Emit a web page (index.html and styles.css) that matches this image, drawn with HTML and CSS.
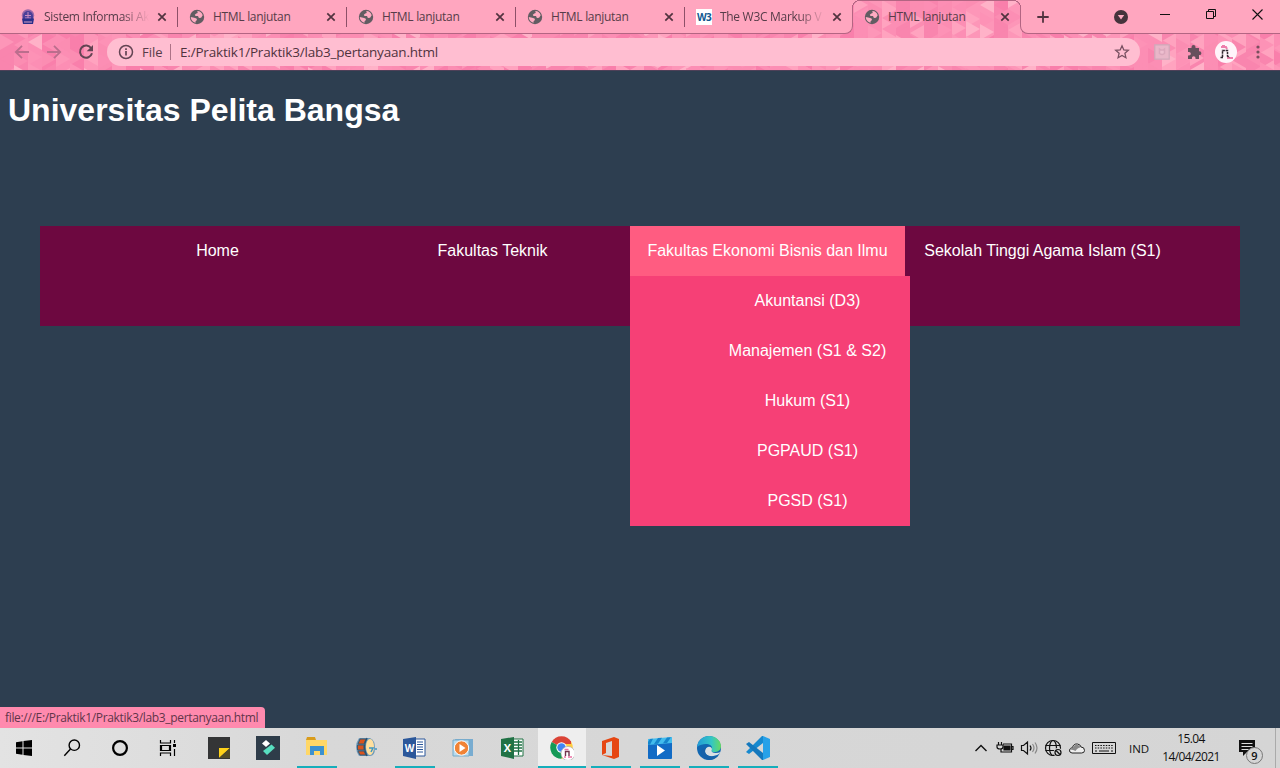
FILE: index.html
```html
<!DOCTYPE html>
<html lang="id">
<head>
<meta charset="utf-8">
<title>HTML lanjutan</title>
<link rel="stylesheet" href="styles.css">
</head>
<body>
<svg class="defs" width="0" height="0">
  <symbol id="globe" viewBox="0 0 16 16"><circle cx="8" cy="8" r="7.2" fill="#625c62"/><path d="M1.800 8l3.400.800 2.300.700.500 1.500-1.500 1.200.3 1.400C4 13.300 1.800 11 1.800 8zM8.300 2c2.800.1 4.700 1.800 5.400 4.300l-1.600 2.400-2.200.2-.9-1.800-2.500-.2-.7-1.200 1.500-1.200 1.400-.4z" fill="#ffabc2"/></symbol>
  <symbol id="close" viewBox="0 0 10 10"><path d="M1.300 1.300l7.400 7.400M8.700 1.300L1.300 8.700" stroke="#51333f" stroke-width="1.700"/></symbol>
</svg>

<header class="browser">
  <svg class="texture" id="texture" width="1280" height="70"></svg>
  <div class="tabs">
    <div class="tab-group">
      <div class="tab">
        <svg class="fav" viewBox="0 0 16 16"><circle cx="8" cy="6.500" r="6.200" fill="#9a68a8"/><path d="M3 7a5 5 0 0110 0v5H3z" fill="#4a3f98"/><path d="M5 6.500h6M5 9h6M8 3v6" stroke="#c98cc0"/><path d="M2 9.500h12l-1 5.500H3z" fill="#2a2f8a"/><path d="M4 13h8" stroke="#d8a0c4"/></svg>
        <span class="label fade">Sistem Informasi Ak</span><svg class="x"><use href="#close"/></svg>
      </div>
      <div class="tab"><svg class="fav"><use href="#globe"/></svg><span class="label">HTML lanjutan</span><svg class="x"><use href="#close"/></svg></div>
      <div class="tab"><svg class="fav"><use href="#globe"/></svg><span class="label">HTML lanjutan</span><svg class="x"><use href="#close"/></svg></div>
      <div class="tab"><svg class="fav"><use href="#globe"/></svg><span class="label">HTML lanjutan</span><svg class="x"><use href="#close"/></svg></div>
      <div class="tab last">
        <span class="fav w3">W3</span>
        <span class="label fade">The W3C Markup V</span><svg class="x"><use href="#close"/></svg>
      </div>
    </div>
    <div class="tab active"><svg class="fav"><use href="#globe"/></svg><span class="label">HTML lanjutan</span><svg class="x"><use href="#close"/></svg></div>
    <div class="window-bar">
      <svg class="plus" width="12" height="12" viewBox="0 0 12 12"><path d="M6 .3v11.400M.3 6h11.400" stroke="#51333f" stroke-width="1.800"/></svg>
      <svg class="media" width="14" height="14" viewBox="0 0 14 14"><circle cx="7" cy="7" r="7" fill="#46333c"/><path d="M3.800 5h6.400L7 9.500z" fill="#ffabc2"/></svg>
      <svg class="min" width="10" height="10" viewBox="0 0 10 10"><path d="M0 5.500h10" stroke="#111"/></svg>
      <svg class="restore" width="10" height="10" viewBox="0 0 10 10" fill="none" stroke="#111"><path d="M.5 2.500h7v7h-7zM2.500 2.500v-2h7v7h-2"/></svg>
      <svg class="exit" width="11" height="11" viewBox="0 0 11 11"><path d="M.5.5l10 10M10.500.5l-10 10" stroke="#111" stroke-width="1.100"/></svg>
    </div>
  </div>
  <div class="toolbar">
    <div class="nav-icons">
      <svg width="16" height="16" viewBox="0 0 16 16" fill="none" stroke="#bb6e8d" stroke-width="1.800"><path d="M15 8H2M8 1.800L1.800 8 8 14.200"/></svg>
      <svg width="16" height="16" viewBox="0 0 16 16" fill="none" stroke="#bb6e8d" stroke-width="1.800"><path d="M1 8h13M8 1.800L14.200 8 8 14.200"/></svg>
      <svg width="16" height="16" viewBox="0 0 16 16"><path d="M13.200 4.200A6.100 6.100 0 1014 9.300" fill="none" stroke="#634453" stroke-width="2"/><path d="M15 1v6.300H8.700z" fill="#634453"/></svg>
    </div>
    <div class="address">
      <svg width="16" height="16" viewBox="0 0 16 16"><circle cx="8" cy="8" r="6.500" fill="none" stroke="#634453" stroke-width="1.500"/><path d="M8 7v4.500M8 4.300v1.700" stroke="#634453" stroke-width="1.700"/></svg>
      <span class="scheme">File</span>
      <span class="url">E:/Praktik1/Praktik3/lab3_pertanyaan.html</span>
      <svg class="star" width="16" height="16" viewBox="0 0 16 16"><path d="M8 1.800l1.800 4.100 4.500.4-3.400 3 1 4.400L8 11.400l-3.900 2.300 1-4.400-3.400-3 4.500-.4z" fill="none" stroke="#785061" stroke-width="1.300"/></svg>
    </div>
    <div class="extensions">
      <svg width="16" height="16" viewBox="0 0 16 16"><path d="M.8.8h14.400v14.400H.8z" fill="#e9b6c8" stroke="#cfa9b9" stroke-width="1.200"/><path d="M5.500 5v4.500q2.500 2 5 0V5L9 6H7z" fill="#eebfd0" stroke="#dba8bc" stroke-width="1.500"/></svg>
      <svg width="16" height="16" viewBox="0 0 16 16"><path d="M2 4h3.500V3a2 2 0 014 0v1H13v3.300h.500a1.900 1.900 0 010 3.800H13V15H9.500v-1a1.800 1.800 0 00-3.600 0v1H2v-3.500h1a1.800 1.800 0 000-3.600H2z" fill="#66505c"/></svg>
      <svg width="22" height="22" viewBox="0 0 22 22"><circle cx="11" cy="11" r="11" fill="#fff4fa"/><path d="M6 6h5l1 2M12 17h6M7 5h3" stroke="#ee7eac" stroke-width="2" fill="none"/><path d="M7.500 16V9.500h5V15l2 1.500M5.500 16.500h2.500" stroke="#30252f" stroke-width="1.500" fill="none" stroke-dasharray="2.500 .7"/></svg>
      <svg width="4" height="14" viewBox="0 0 4 14" fill="#79505f"><circle cx="2" cy="2" r="1.600"/><circle cx="2" cy="7" r="1.600"/><circle cx="2" cy="12" r="1.600"/></svg>
    </div>
  </div>
</header>

<main class="page">
  <h1>Universitas Pelita Bangsa</h1>
  <nav class="menu">
    <ul class="menu-list">
      <li>Home</li>
      <li>Fakultas Teknik</li>
      <li class="open">Fakultas Ekonomi Bisnis dan Ilmu
        <ul class="submenu">
          <li>Akuntansi (D3)</li><li>Manajemen (S1 &amp; S2)</li><li>Hukum (S1)</li><li>PGPAUD (S1)</li><li>PGSD (S1)</li>
        </ul>
      </li>
      <li>Sekolah Tinggi Agama Islam (S1)</li>
    </ul>
  </nav>
  <div class="status"><span>file:///E:/Praktik1/Praktik3/lab3_pertanyaan.html</span></div>
</main>

<footer class="taskbar">
  <div class="system">
    <div><svg viewBox="0 0 24 24"><path d="M4 6.200l6.500-1v6.300H4zM11.500 5L20 4v7.500h-8.500zM4 12.500h6.500v6.300L4 17.800zM11.500 12.500H20V20l-8.500-1.100z"/></svg></div>
    <div><svg viewBox="0 0 24 24" fill="none" stroke="#000" stroke-width="1.400"><circle cx="14.300" cy="9.200" r="5.200"/><path d="M10.500 13L4.300 19.700"/></svg></div>
    <div><svg viewBox="0 0 24 24"><circle cx="12" cy="12" r="6.900" fill="none" stroke="#000" stroke-width="2.200"/></svg></div>
    <div><svg viewBox="0 0 24 24" fill="none" stroke="#000" stroke-width="1.200"><path d="M4.500 4v3h10V4M4.500 20v-3h10v3M5.500 9.500h8v5h-8zM4.500 9v6M14.500 9v6M18.500 4v3M18.500 13v7"/><path d="M17 8h3v3h-3z" fill="#000" stroke="none"/></svg></div>
  </div>
  <div class="apps">
    <div><svg viewBox="0 0 24 24"><path d="M1 1h22v22H1z" fill="#343536"/><path d="M12 12h11L12 22z" fill="#ffd219"/><path d="M12 22l11-10v10z" fill="#514b28"/></svg></div>
    <div><svg viewBox="0 0 24 24"><path d="M0 0h24v24H0z" fill="#2e3c49"/><path d="M10 4l4 3.500-4 3.500-4-3.500z" fill="#fff"/><path d="M15.500 8.500l3.500 3.300-8 7.200-4-4z" fill="#58dfc0"/></svg></div>
    <div class="running"><svg viewBox="0 0 24 24"><path d="M1 4l1-3h8l1 3z" fill="#d99c1c"/><path d="M1 4h21v15H1z" fill="#ffd766"/><path d="M5 10h14v9h-4v-4H9v4H5z" fill="#3c91cf"/></svg></div>
    <div><svg viewBox="0 0 24 24"><path d="M5 2h11q5 2 5 10t-5 8H5q-6-9 0-18z" fill="#6f9bbb"/><ellipse cx="16" cy="11" rx="4" ry="8" fill="#ffdf9e"/><path d="M6 3h6l-2 5H4zM3.500 9H10v5H3.500zM4 15h6l2 4H6z" fill="#d9531d" stroke="#395971"/><path d="M13 2q-5 9 0 18" stroke="#2b526e" fill="none" stroke-width="1.500"/><path d="M15 12h4l-2 4" stroke="#3c97c4" stroke-width="1.500" fill="none"/><circle cx="22" cy="13" r="1" fill="#3c97c4"/></svg></div>
    <div class="running"><svg viewBox="0 0 24 24"><path d="M12 3h10v17H12z" fill="#fff" stroke="#2b579a"/><path d="M14 6h6M14 8.500h6M14 11h6M14 13.500h6M14 16h6" stroke="#2b579a"/><path d="M0 3l13-2v22L0 20z" fill="#2b579a"/><text x="1.800" y="15.500" class="letter w-letter">W</text></svg></div>
    <div><svg viewBox="0 0 24 24"><path d="M3 3h18v17H6z" fill="#78acd0"/><path d="M1 4h16v16H1z" fill="#b9dbee" stroke="#76abc9"/><circle cx="9.500" cy="12" r="7.200" fill="#f18335" stroke="#fff"/><path d="M7.500 8v8l6-4z" fill="#fff"/></svg></div>
    <div><svg viewBox="0 0 24 24"><path d="M12 3h10v17H12z" fill="#fff" stroke="#207245"/><path d="M13 6h8M13 9h8M13 12h8M13 15h8M17.500 4v15" stroke="#207245" stroke-width="1.300"/><path d="M0 3l13-2v22L0 20z" fill="#207245"/><text x="2.700" y="16" class="letter x-letter">X</text></svg></div>
    <div class="running focused"><svg viewBox="0 0 24 24"><path d="M11.500 11.500L1.700 5.900A11.300 11.300 0 0121.300 5.900z" fill="#db4437"/><path d="M1.700 5.900A11.300 11.300 0 0011.500 22.800l4.800-8.500z" fill="#159957"/><path d="M21.300 5.900A11.300 11.300 0 0111.500 22.800l2-10 1-6.900z" fill="#ffcd40"/><path d="M4 5h17v3h-9z" fill="#db4437"/><circle cx="11.500" cy="11.500" r="5.200" fill="#fff"/><circle cx="11.500" cy="11.500" r="4.200" fill="#4285f4"/><circle cx="18" cy="17.500" r="7" fill="#fff" stroke="#aaa" stroke-width=".7"/><path d="M14.500 13.500h4M18 21h4M14 21h2" stroke="#ed70a4" stroke-width="1.500"/><path d="M15.500 20v-4.500h3.500v4.500" stroke="#71334c" fill="none" stroke-width="1.400"/></svg></div>
    <div class="running"><svg viewBox="0 0 24 24"><path d="M3 5l12-4 5 2v18l-5 2-12-4 10 1V5L7 7v10l-4 2z" fill="#e64612"/></svg></div>
    <div class="running"><svg viewBox="0 0 24 24"><rect y="4" width="24" height="19" rx="1" fill="#126bc5"/><path d="M0 9V3l24-2v6z" fill="#43bced"/><path d="M2 3l3-.200-3 6H0V6zM10 2l4-.300-4 6-4 .400zM19 1.500l4-.300L19 7l-4 .300z" fill="#1685cc"/><path d="M9 9v11l8-5.500z" fill="#fff"/></svg></div>
    <div class="running"><svg viewBox="0 0 24 24"><defs><linearGradient id="edge"><stop stop-color="#239bd7"/><stop offset=".6" stop-color="#34c6c5"/><stop offset="1" stop-color="#67da60"/></linearGradient></defs><circle cx="12" cy="12" r="12" fill="#1267b1"/><path d="M0 11C1 4 6 0 12 0c7 0 12 5 12 10 0 4-3 6-7 6-3 0-3-2-2-3 1-5-8-7-15-2z" fill="url(#edge)"/><path d="M15 13c-1-4-7-2-7 2 0 5 7 7 14 3l2-2q-6 2-9 0-1-1 0-3z" fill="#d9e0e3"/><path d="M9 12c-3 5 1 10 12 8-6 6-14 5-17-2-1-3 1-6 5-6z" fill="#1762a9"/></svg></div>
    <div class="running"><svg viewBox="0 0 24 24"><path d="M17 0v7L3 18l-3-2L16 0z" fill="#1689cf"/><path d="M17 24v-7L3 6 0 8l16 16z" fill="#1478bd"/><path d="M17 0l7 3v18l-7 3z" fill="#27a1e8"/></svg></div>
  </div>
  <div class="tray">
    <svg viewBox="0 0 24 24" fill="none" stroke="#111" stroke-width="1.400"><path d="M6.500 15l5.500-5.500 5.500 5.500"/></svg>
    <svg viewBox="0 0 24 24" fill="none" stroke="#111" stroke-width="1.200"><path d="M10 8h8.500v8H8v-3M18.500 10.500h1.500v3h-1.500M5.500 6v3M8.500 6v3M4 9h6v2q0 2-3 2t-3-2z"/><path d="M11 10h6v4h-6z" fill="#111"/></svg>
    <svg viewBox="0 0 24 24" fill="none" stroke="#111" stroke-width="1.200"><path d="M4.500 9.500h2l4-3.500v12l-4-3.500h-2zM13 9.500q2 2.500 0 5"/><path d="M15.500 8q3 4 0 8M18 6.500q4 5.500 0 11" stroke="#888"/></svg>
    <svg viewBox="0 0 24 24" fill="none" stroke="#111" stroke-width="1.200"><circle cx="12" cy="12" r="7.500"/><ellipse cx="12" cy="12" rx="3.500" ry="7.500"/><path d="M4.500 9.500h15M4.500 14.500h15"/><circle cx="17" cy="16.500" r="4.500" fill="#d7d7d7" stroke="none"/><circle cx="17" cy="16.500" r="3"/><path d="M15 14.500l4 4"/></svg>
    <svg viewBox="0 0 24 24"><path d="M7 17q-3-.5-2.500-3 .5-2 3-2.500 1-4 5-3.500 3 .5 3.500 3 3.500 0 3.500 3.500 0 2.500-3 2.500z" fill="#eee" stroke="#222"/><path d="M5 13.500q1-2 3-2 1-3.500 5-2.500 2.500 1 2.500 2.500-3 0-5 3.500-2-1.500-5.500-1.500z" fill="#888"/></svg>
    <svg class="keyboard" viewBox="0 0 24 14" fill="none" stroke="#111"><path d="M.5 1.500h23v11H.5z"/><path d="M3 4.500h18M3 7h18" stroke-dasharray="1.500 1.200"/><path d="M3 10h2M7 10h10M19 10h2"/></svg>
    <span class="lang">IND</span>
    <div class="clock"><span>15.04</span><span>14/04/2021</span></div>
    <div class="notice"><svg viewBox="0 0 18 18"><path d="M1 1h16v12H9l-4 4v-4H1z" fill="#111"/><path d="M3.500 4.500h11M3.500 7.500h11M3.500 10.500h7" stroke="#ddd"/></svg><span class="badge">9</span></div>
  </div>
</footer>
<script src="texture.js"></script>
</body>
</html>
```
FILE: styles.css
```css
* { box-sizing: border-box; }
body { margin: 0; width: 1280px; height: 768px; overflow: hidden; display: flex; flex-direction: column; font-family: "Open Sans", sans-serif; }
svg { display: block; flex: none; }
ul { list-style: none; margin: 0; padding: 0; }
.defs { position: absolute; }
.browser { position: relative; isolation: isolate; height: 71px; border-bottom: 1px solid #4d4058; overflow: hidden; background: #fb91b4; color: #563c48; }
.texture { position: absolute; inset: 0; z-index: -1; }
.tabs { display: flex; height: 34px; }
.tab-group { display: flex; width: 853px; padding-left: 8px; background: #ffa6bf; border: solid #b36583; border-width: 0 1px 1px 0; border-bottom-right-radius: 8px; }
.tab { display: flex; align-items: center; flex: none; width: 169px; height: 33px; padding: 0 10px 0 12px; position: relative; }
.tab-group .tab:not(.last)::after { content: ""; position: absolute; right: -1px; top: 7px; width: 1px; height: 20px; background: #8d5068; }
.tab-group .last { width: 168px; }
.fav { width: 16px; height: 16px; flex: none; }
.label { width: 106px; margin-left: 8px; font-size: 12px; letter-spacing: -.3px; line-height: 18px; white-space: nowrap; }
.fade { -webkit-mask-image: linear-gradient(90deg, #000 78px, transparent 105px); mask-image: linear-gradient(90deg, #000 78px, transparent 105px); }
.x { width: 10px; height: 10px; margin-left: auto; }
.w3 { background: #fff; color: #10588f; font-size: 10px; line-height: 16px; text-align: center; font-weight: 700; letter-spacing: -.8px; }
.tab.active { width: 167px; height: 33px; padding-left: 11px; padding-right: 10px; }
.tab.active::before, .tab.active::after { content: ""; position: absolute; top: 0; width: 8px; height: 8px; }
.tab.active::before { left: -1px; background: radial-gradient(circle at 100% 100%, transparent 7px, #b36583 7.200px 8px, #ffa6bf 8.200px); }
.tab.active::after { right: -1px; background: radial-gradient(circle at 0 100%, transparent 7px, #b36583 7.200px 8px, #ffa6bf 8.200px); }
.tab.active { box-shadow: inset 0 1px #b36583; }
.window-bar { display: flex; align-items: center; flex: 1; height: 34px; padding-left: 16px; background: #ffa6bf; border: solid #b36583; border-width: 0 0 1px 1px; border-bottom-left-radius: 8px; }
.media { margin-left: 65px; }
.min { margin-left: 32px; margin-bottom: 5px; }
.restore { margin-left: 36px; margin-bottom: 5px; }
.exit { margin-left: 36px; margin-bottom: 5px; }
.toolbar { display: flex; align-items: center; height: 36px; padding-left: 14px; }
.nav-icons { display: flex; gap: 16px; width: 93px; }
.address { display: flex; align-items: center; width: 1033px; height: 28px; border-radius: 14px; padding: 0 10px 0 11px; background: #ffbed1; }
.scheme { font-size: 13px; margin-left: 8px; width: 29px; border-right: 1px solid #ad7287; line-height: 16px; }
.url { font-size: 13.500px; margin-left: 9px; color: #50333e; letter-spacing: -.19px; }
.star { margin-left: auto; }
.extensions { display: flex; align-items: center; margin-left: 14px; }
.extensions svg:nth-child(2) { margin-left: 16px; }
.extensions svg:nth-child(3) { margin-left: 13px; }
.extensions svg:nth-child(4) { margin-left: 19px; }

.page { flex: 1; display: flex; flex-direction: column; background: #2d3e50; font: 16px/50px "Liberation Sans", Arial, sans-serif; color: #fff; }
h1 { margin: 21px 8px 97px; font-size: 32px; line-height: 37px; }
.menu { height: 100px; margin: 0 40px; padding-left: 40px; background: #6d0840; }
.menu-list { display: flex; text-align: center; }
.menu-list > li { width: 275px; height: 50px; position: relative; }
.open { background: #ff5c81; }
.submenu { position: absolute; left: 0; top: 50px; width: 280px; padding-left: 75px; background: #f64076; }
.status { margin-top: auto; align-self: flex-start; width: 265px; height: 21px; padding-left: 5px; background: #ff8aae; border-radius: 0 4px 0 0; font: 12px/21px "Open Sans", sans-serif; letter-spacing: -.33px; color: #61354a; white-space: nowrap; }

.taskbar { display: flex; height: 40px; background: linear-gradient(90deg, #e3e3e3, #d8d8d8 25%, #d5d5d5); }
.system { display: flex; width: 195px; }
.system div { width: 48px; display: grid; place-items: center; }
.system svg, .tray > svg { width: 24px; height: 24px; }
.apps { display: flex; }
.apps div { width: 49px; height: 40px; display: grid; place-items: center; padding-right: 1px; position: relative; }
.apps svg { width: 24px; height: 24px; }
.apps .running::after { content: ""; position: absolute; left: 4px; right: 5px; bottom: 0; height: 2px; background: #16aebb; }
.apps .focused { background: linear-gradient(#eee, #eee) 0 0 / 48px 40px no-repeat; }
.apps .focused::after { left: 0; right: 1px; }
.letter { fill: #fff; font: bold 11px "Open Sans", sans-serif; }
.w-letter { font-size: 10px; }
.tray { display: flex; align-items: center; margin-left: auto; width: 307px; color: #111; font-size: 12px; border-right: 1px solid #aaa; margin-right: 4px; height: 40px; }
.tray .keyboard { height: 14px; margin-left: 3px; }
.lang { margin-left: 13px; font-size: 11.500px; width: 22px; }
.clock { display: flex; flex-direction: column; align-items: center; margin-left: 9px; width: 62px; font-size: 12px; line-height: 18px; letter-spacing: -.6px; padding-bottom: 1px; }
.notice { position: relative; margin-left: 16px; }
.notice svg { width: 18px; height: 18px; }
.badge { position: absolute; left: 8px; top: 8px; width: 17px; height: 17px; border: 1px solid #777; border-radius: 50%; background: #d5d5d5; font-size: 11px; font-weight: 600; line-height: 15px; text-align: center; }
```
FILE: texture.js
```js
// Triangular theme mosaic behind the active tab and the toolbar.
const texture = document.getElementById('texture');
const tones = ['#f985ae', '#fb8db2', '#fd96b8', '#ffa3bf', '#f97fab', '#fc8eb4', '#ffb2c8', '#fd92b6'];
let seed = 29;
const next = () => (seed = (seed * 16807) % 2147483647) / 2147483647;
let shapes = '';
for (let col = 0; col < 92; col++) {
  const x = col * 14;
  shapes += `<rect x="${x}" width="14" height="70" fill="${tones[Math.floor(next() * 6)]}"/>`;
  for (let row = -1; row < 6; row++) {
    const y = row * 14 + Math.floor(next() * 7);
    const points = next() > .5
      ? `${x},${y - 8} ${x + 14},${y} ${x},${y + 8}`
      : `${x + 14},${y - 8} ${x},${y} ${x + 14},${y + 8}`;
    shapes += `<polygon points="${points}" fill="${tones[Math.floor(next() * tones.length)]}"/>`;
  }
}
texture.innerHTML = shapes;
```
